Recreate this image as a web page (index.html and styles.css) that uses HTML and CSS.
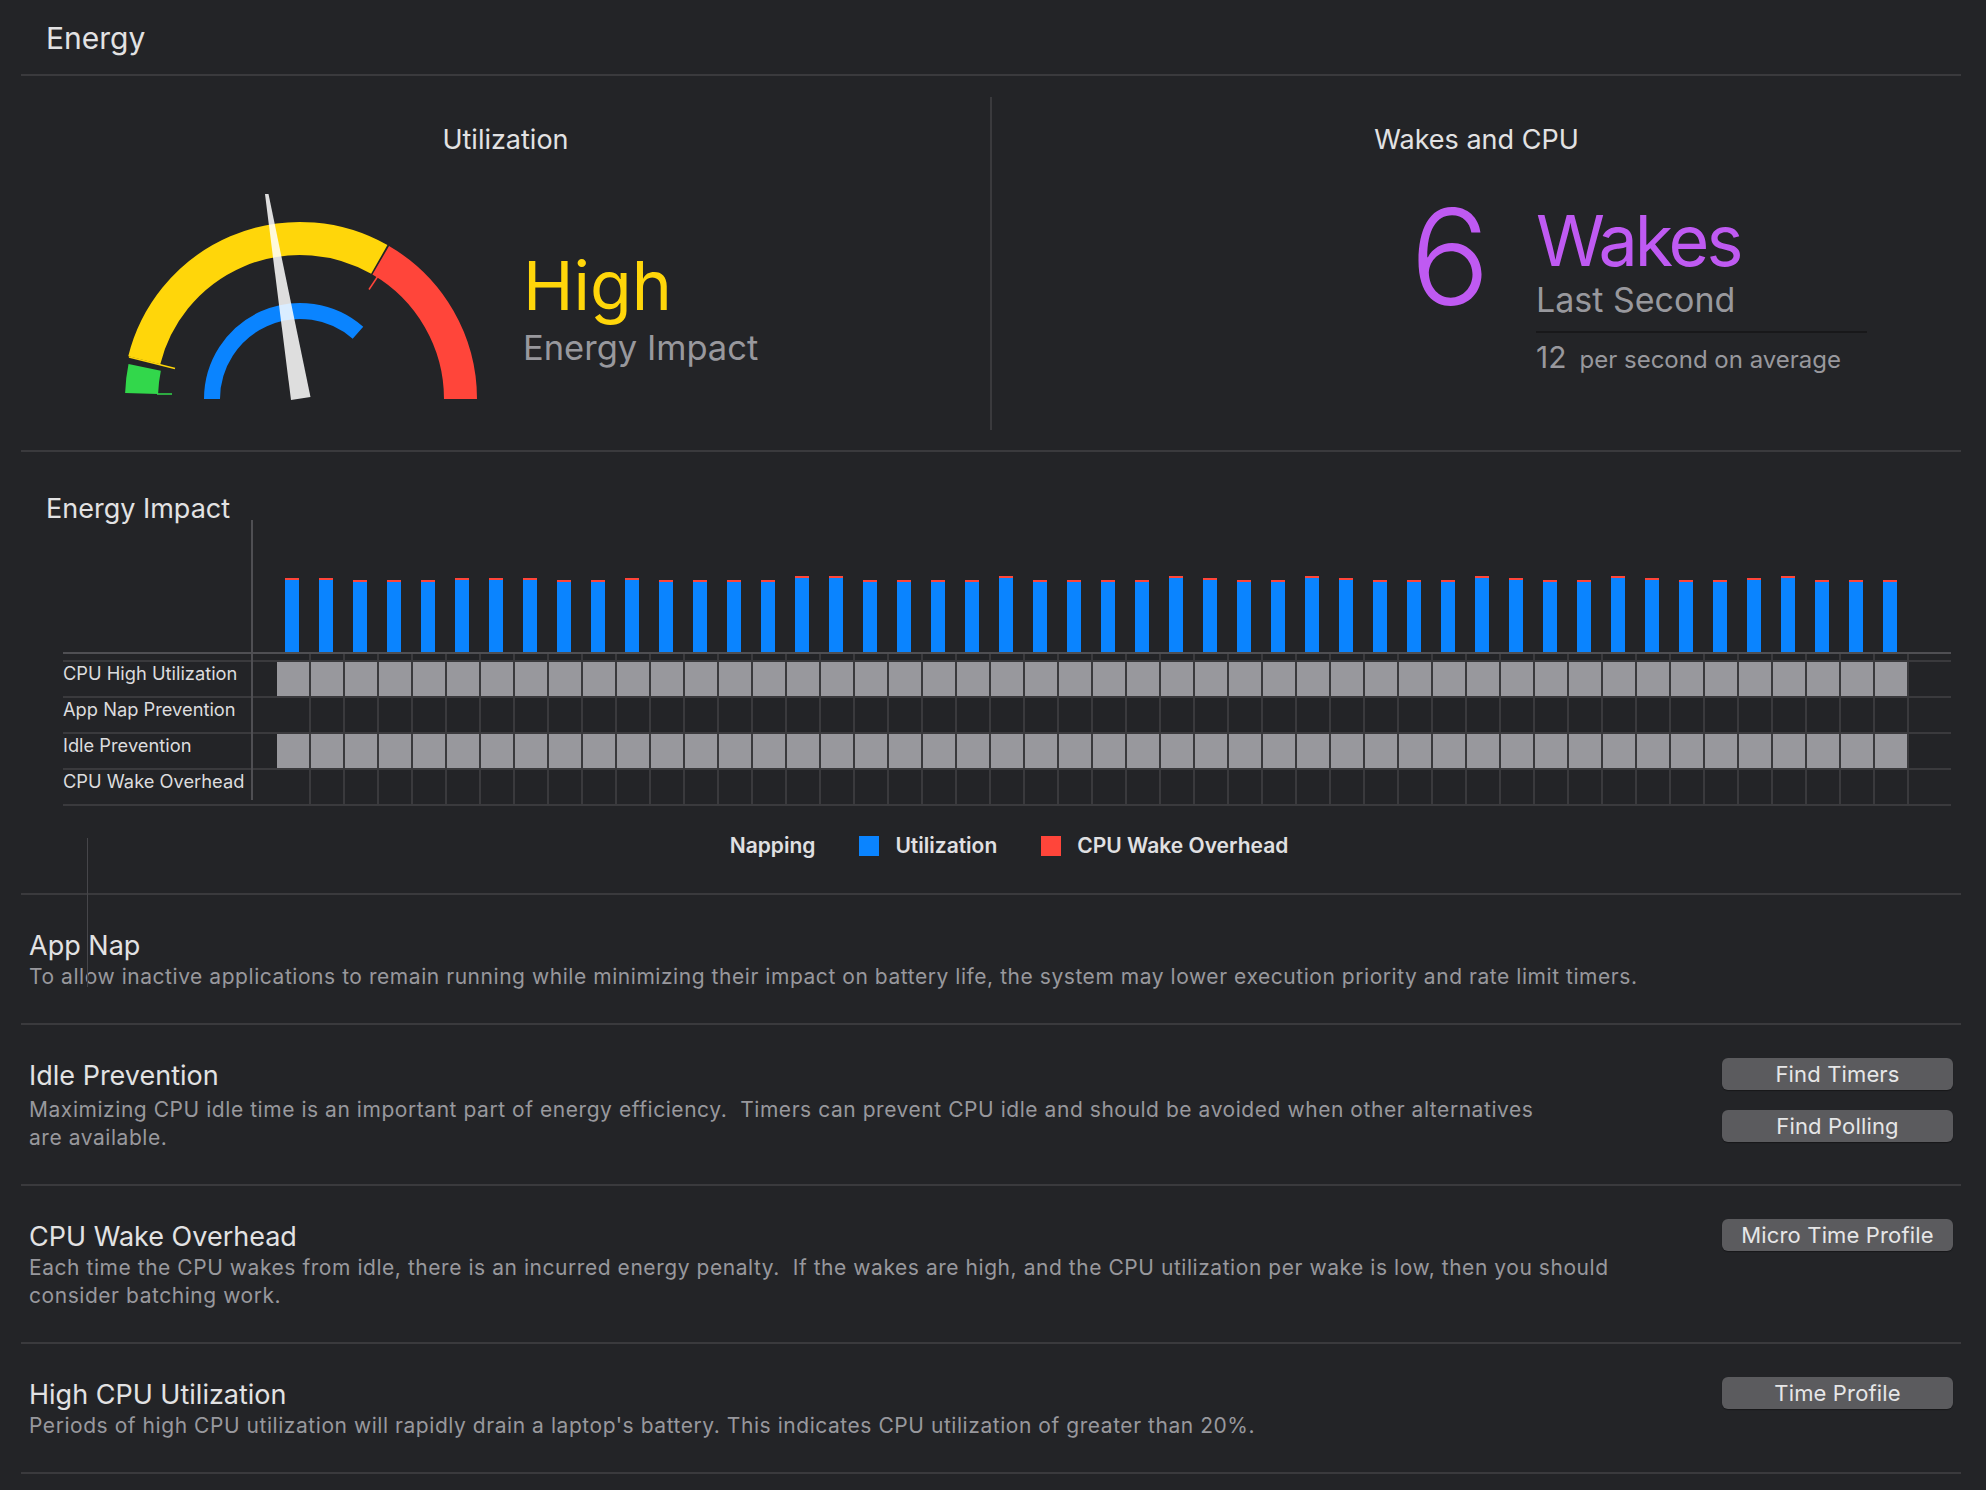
FILE: index.html
```html
<!DOCTYPE html>
<html lang="en">
<head>
<meta charset="utf-8">
<title>Energy</title>
<link rel="stylesheet" href="styles.css">
</head>
<body>
<div class="app">
  <header class="hdr"><h1 class="hdr-title">Energy</h1></header>

  <section class="top">
    <div class="panel">
      <h2 class="panel-title">Utilization</h2>
      <div class="gauge-row">
        <svg class="gauge" width="380" height="230" viewBox="110 180 380 230">
          <path d="M141.6 393.47 A158.5 158.5 0 0 1 144.68 367.4" fill="none" stroke="#32d74b" stroke-width="33"/>
          <line x1="157" y1="394" x2="172" y2="394" stroke="#32d74b" stroke-width="1.5"/>
          <path d="M144.27 360.17 A160.5 160.5 0 0 1 379.28 259.45" fill="none" stroke="#ffd60a" stroke-width="33"/>
          <line x1="129" y1="357" x2="175" y2="368.5" stroke="#ffd60a" stroke-width="1.5"/>
          <path d="M380.74 260.29 A160.5 160.5 0 0 1 460.5 399" fill="none" stroke="#ff453a" stroke-width="33"/>
          <line x1="378" y1="276" x2="369" y2="289.5" stroke="#ff453a" stroke-width="1.5"/>
          <path d="M212 399 A88 88 0 0 1 357.96 332.79" fill="none" stroke="#0a84ff" stroke-width="16"/>
          <polygon points="265,194 268.5,194 310.5,397 291,400" fill="#ffffff" fill-opacity="0.85"/>
        </svg>
        <div class="impact">
          <div class="impact-level">High</div>
          <div class="impact-sub">Energy Impact</div>
        </div>
      </div>
    </div>
    <div class="vdiv"></div>
    <div class="panel">
      <h2 class="panel-title">Wakes and CPU</h2>
      <div class="wake-row">
        <div class="wake-num">6</div>
        <div class="wake-info">
          <div class="wake-label">Wakes</div>
          <div class="wake-sub">Last Second</div>
          <div class="wake-rule"></div>
          <div class="wake-avg"><span class="avg-num">12</span><span class="avg-text">per second on average</span></div>
        </div>
      </div>
    </div>
  </section>

  <section class="chart-sec">
    <h2 class="chart-title">Energy Impact</h2>
    <div class="chart">
      <div class="axis"></div>
      <div class="bars-row">
        <div class="lbl"></div>
        <div class="bars">
          <div class="bar hb"></div><div class="bar hb"></div><div class="bar hc"></div><div class="bar hc"></div>
          <div class="bar hc"></div><div class="bar hb"></div><div class="bar hb"></div><div class="bar hb"></div>
          <div class="bar hc"></div><div class="bar hc"></div><div class="bar hb"></div><div class="bar hc"></div>
          <div class="bar hc"></div><div class="bar hc"></div><div class="bar hc"></div><div class="bar ha"></div>
          <div class="bar ha"></div><div class="bar hc"></div><div class="bar hc"></div><div class="bar hc"></div>
          <div class="bar hc"></div><div class="bar ha"></div><div class="bar hc"></div><div class="bar hc"></div>
          <div class="bar hc"></div><div class="bar hc"></div><div class="bar ha"></div><div class="bar hb"></div>
          <div class="bar hc"></div><div class="bar hc"></div><div class="bar ha"></div><div class="bar hb"></div>
          <div class="bar hc"></div><div class="bar hc"></div><div class="bar hc"></div><div class="bar ha"></div>
          <div class="bar hb"></div><div class="bar hc"></div><div class="bar hc"></div><div class="bar ha"></div>
          <div class="bar hb"></div><div class="bar hc"></div><div class="bar hc"></div><div class="bar hb"></div>
          <div class="bar ha"></div><div class="bar hc"></div><div class="bar hc"></div><div class="bar hc"></div>
        </div>
      </div>
      <div class="tick-row"><div class="lbl"></div><div class="track"></div></div>
      <div class="grow"><div class="lbl">CPU High Utilization</div><div class="track on"></div></div>
      <div class="grow"><div class="lbl">App Nap Prevention</div><div class="track"></div></div>
      <div class="grow"><div class="lbl">Idle Prevention</div><div class="track on"></div></div>
      <div class="grow"><div class="lbl">CPU Wake Overhead</div><div class="track"></div></div>
    </div>
    <div class="legend">
      <div class="leg-item"><span class="sw sw-none"></span><span>Napping</span></div>
      <div class="leg-item"><span class="sw sw-blue"></span><span>Utilization</span></div>
      <div class="leg-item"><span class="sw sw-red"></span><span>CPU Wake Overhead</span></div>
    </div>
  </section>

  <section class="info">
    <div class="info-text">
      <h3 class="info-title">App Nap</h3>
      <p class="info-desc">To allow inactive applications to remain running while minimizing their impact on battery life, the system may lower execution priority and rate limit timers.</p>
    </div>
  </section>

  <section class="info">
    <div class="info-text">
      <h3 class="info-title">Idle Prevention</h3>
      <p class="info-desc info-desc-idle">Maximizing CPU idle time is an important part of energy efficiency.&nbsp; Timers can prevent CPU idle and should be avoided when other alternatives<br>are available.</p>
    </div>
    <div class="btns">
      <div class="btn">Find Timers</div>
      <div class="btn">Find Polling</div>
    </div>
  </section>

  <section class="info">
    <div class="info-text">
      <h3 class="info-title">CPU Wake Overhead</h3>
      <p class="info-desc">Each time the CPU wakes from idle, there is an incurred energy penalty.&nbsp; If the wakes are high, and the CPU utilization per wake is low, then you should<br>consider batching work.</p>
    </div>
    <div class="btns">
      <div class="btn">Micro Time Profile</div>
    </div>
  </section>

  <section class="info">
    <div class="info-text">
      <h3 class="info-title">High CPU Utilization</h3>
      <p class="info-desc">Periods of high CPU utilization will rapidly drain a laptop's battery. This indicates CPU utilization of greater than 20%.</p>
    </div>
    <div class="btns">
      <div class="btn">Time Profile</div>
    </div>
  </section>
</div>
<div class="split-line"></div>
</body>
</html>
```

FILE: styles.css
```css
* { box-sizing: border-box; }

html, body {
  margin: 0;
  background: #232427;
}

body {
  position: relative;
  font-family: Inter, "Noto Sans", "Liberation Sans", sans-serif;
  color: #e2e2e3;
  width: 1986px;
  height: 1490px;
  overflow: hidden;
}

.app {
  padding: 0 25px 0 21px;
}

/* header */
.hdr {
  padding: 20px 0 18px 25px;
  border-bottom: 2px solid #3a3a3d;
}
.hdr-title {
  margin: 0;
  font-size: 30px;
  line-height: 36px;
  font-weight: 400;
  color: #e2e2e3;
}

/* top gauges */
.top {
  display: flex;
  height: 376px;
  border-bottom: 2px solid #3a3a3d;
}
.panel {
  flex: 1;
}
.vdiv {
  width: 2px;
  margin: 21px 0 20px;
  background: #3a3a3d;
}
.panel-title {
  margin: 48px 0 0;
  font-size: 27px;
  line-height: 32px;
  font-weight: 400;
  text-align: center;
  color: #e2e2e3;
}

.gauge-row {
  display: flex;
  align-items: flex-start;
  margin-top: 24px;
  padding-left: 89px;
}
.gauge {
  display: block;
  flex: none;
}
.impact {
  margin-left: 33px;
  margin-top: 71px;
}
.impact-level {
  font-size: 68px;
  line-height: 68px;
  color: #ffd60a;
}
.impact-sub {
  margin-top: 12px;
  font-size: 34.5px;
  line-height: 33px;
  color: #98989d;
}

.wake-row {
  display: flex;
  align-items: flex-start;
  margin-top: 34px;
  padding-left: 408px;
}
.wake-num {
  width: 100px;
  text-align: center;
  font-size: 133px;
  line-height: 133px;
  font-weight: 300;
  color: #bf5af2;
}
.wake-info {
  margin-left: 36px;
  margin-top: 16px;
}
.wake-label {
  font-size: 70px;
  line-height: 70px;
  height: 72px;
  color: #bf5af2;
  letter-spacing: -3px;
}
.wake-sub {
  margin-top: 4px;
  font-size: 34px;
  line-height: 36px;
  color: #98989d;
}
.wake-rule {
  width: 331px;
  height: 2px;
  margin-top: 13px;
  background: #18181a;
}
.wake-avg {
  display: flex;
  align-items: baseline;
  margin-top: 9px;
  color: #98989d;
}
.avg-num {
  font-size: 30px;
  line-height: 30px;
  margin-right: 13px;
}
.avg-text {
  font-size: 24px;
  line-height: 30px;
}

/* energy impact chart */
.chart-sec {
  padding: 45px 0 37px;
  border-bottom: 2px solid #3a3a3d;
}
.chart-title {
  margin: 0;
  padding-left: 25px;
  font-size: 27px;
  line-height: 23px;
  font-weight: 400;
  color: #e2e2e3;
}
.chart {
  position: relative;
  margin: 0 10px 0 42px;
}
.axis {
  position: absolute;
  left: 188px;
  top: 0;
  width: 2px;
  height: 280px;
  background: #4f4f53;
}
.bars-row,
.tick-row,
.grow {
  display: flex;
}
.lbl {
  width: 190px;
  flex: none;
}
.bars-row {
  height: 134px;
  border-bottom: 2px solid #4f4f53;
}
.bars {
  display: flex;
  align-items: flex-end;
  padding-left: 24px;
}
.bar {
  width: 14px;
  margin: 0 12px 0 8px;
  background: #0a84ff;
  border-top: 2px solid #ff453a;
}
.ha { height: 76px; }
.hb { height: 74px; }
.hc { height: 72px; }

.track {
  width: 1632px;
  margin-left: 24px;
  background: repeating-linear-gradient(90deg, transparent 0 32px, #3a3a3d 32px 34px);
}
.track.on {
  background: repeating-linear-gradient(90deg, #98989d 0 32px, #3a3a3d 32px 34px);
}
.tick-row {
  height: 8px;
  border-bottom: 2px solid #3a3a3d;
}
.grow {
  height: 36px;
  border-bottom: 2px solid #3a3a3d;
}
.grow .lbl {
  font-size: 18.3px;
  line-height: 23px;
  color: #dcdcde;
}

.legend {
  display: flex;
  justify-content: center;
  gap: 44px;
  margin-top: 30px;
  height: 20px;
  font-size: 21px;
  line-height: 20px;
  font-weight: 600;
  color: #e0e0e2;
}
.leg-item {
  display: flex;
  align-items: center;
  gap: 16px;
}
.sw {
  width: 20px;
  height: 20px;
  display: block;
}
.sw-none { background: transparent; }
.sw-blue { background: #0a84ff; }
.sw-red { background: #ff453a; }

/* info sections */
.info {
  display: flex;
  justify-content: space-between;
  align-items: flex-start;
  padding: 33px 8px 32px;
  border-bottom: 2px solid #3a3a3d;
}
.info-text {
  padding-top: 4px;
}
.info-title {
  margin: 0;
  font-size: 27px;
  line-height: 28px;
  font-weight: 400;
  color: #e2e2e3;
}
.info-desc {
  margin: 3px 0 0;
  font-size: 21px;
  line-height: 28px;
  letter-spacing: 0.55px;
  color: #98989d;
}
.info-desc-idle {
  margin-top: 6px;
}
.btns {
  display: flex;
  flex-direction: column;
  gap: 20px;
}
.btn {
  width: 231px;
  height: 32px;
  border-radius: 6px;
  background: #5b5b5e;
  box-shadow: 0 1px 1px rgba(0, 0, 0, 0.35);
  color: #e6e6e7;
  font-size: 22px;
  letter-spacing: 0.15px;
  display: flex;
  align-items: center;
  justify-content: center;
}

.split-line {
  position: absolute;
  left: 87px;
  top: 838px;
  width: 1px;
  height: 149px;
  background: #46464a;
}
```
